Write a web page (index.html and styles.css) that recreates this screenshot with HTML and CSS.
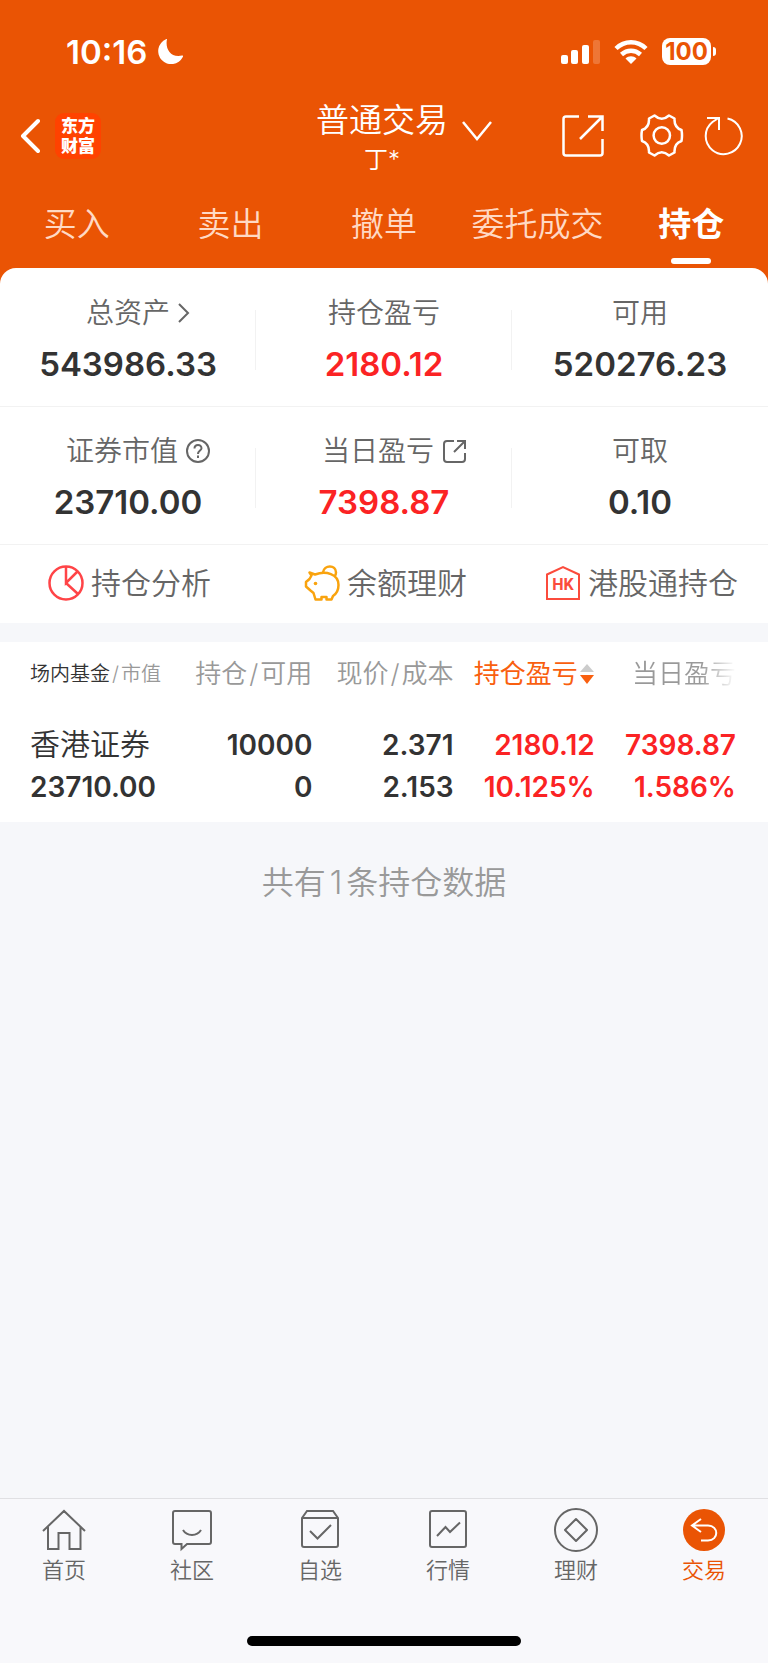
FILE: index.html
```html
<!DOCTYPE html>
<html lang="zh-CN">
<head>
    <meta charset="UTF-8">
    <meta name="viewport" content="width=device-width, initial-scale=1.0">
    <title>持仓</title>
    <link rel="stylesheet" href="styles.css">
</head>
<body>

    <div class="top">
        <div class="status-bar">
            <span class="time">10:16</span>
            <svg class="moon" width="26" height="26" viewBox="0 0 26 26"><path d="M10 0C8 9 13 19 25 16.500C26 16.300 26.300 17 25.800 18A13 13 0 1 1 9 .2C9.800-.2 10.200-.2 10 0Z" fill="#fff"/></svg>
            <div class="status-icons">
                <svg width="39" height="26" viewBox="0 0 39 26" fill="#fff">
                    <rect x="0" y="16" width="7" height="9" rx="2"/>
                    <rect x="10" y="11" width="7" height="14" rx="2"/>
                    <rect x="21" y="6" width="7" height="19" rx="2"/>
                    <rect x="32" y="1" width="7" height="24" rx="2" opacity=".2"/>
                </svg>
                <svg width="34" height="26" viewBox="0 0 34 26" fill="none" stroke="#fff" stroke-width="4.500">
                    <path d="M2 9.500C10.500 1.200 23.500 1.200 32 9.500"/>
                    <path d="M7.500 15.500C13 10.500 21 10.500 26.500 15.500"/>
                    <path d="M11.500 19.500C14.500 16.500 19.500 16.500 22.500 19.500L17 25Z" fill="#fff" stroke="none"/>
                </svg>
                <span class="battery">100</span>
            </div>
        </div>

        <header class="header">
            <div class="header-left">
                <button class="icon-btn" aria-label="返回">
                    <svg width="20" height="36" viewBox="0 0 20 36" fill="none" stroke="#fff" stroke-width="4" stroke-linecap="round" stroke-linejoin="round"><path d="M18 3L3 18L18 33"/></svg>
                </button>
                <span class="logo">东方<br>财富</span>
            </div>
            <button class="account">
                <span class="account-name">普通交易</span>
                <svg width="30" height="22" viewBox="0 0 30 22" fill="none" stroke="#fff" stroke-width="2.500"><path d="M1 2L15 19L29 2"/></svg>
                <span class="account-user">丁*</span>
            </button>
            <div class="header-right">
                <button class="icon-btn" aria-label="分享">
                    <svg width="42" height="44" viewBox="0 0 42 44" fill="none" stroke="#fff" stroke-width="2.500"><path d="M17 2.500H4Q1.500 2.500 1.500 5V39Q1.500 41.500 4 41.500H38Q40.500 41.500 40.500 39V25M26 2.500H40.500V17M40.500 2.500L18 25"/></svg>
                </button>
                <button class="icon-btn gear" aria-label="设置">
                    <svg width="44" height="44" viewBox="0 0 44 44" fill="none" stroke="#fff" stroke-width="2.500" stroke-linejoin="round"><path d="M14.500 1.500Q21.800 8 29 1.500L34.500 4.500Q34 13.500 41.500 16Q42.500 21.500 41.500 27Q34 29.500 34.500 38.500L29 41.500Q21.800 35 14.500 41.500L9 38.500Q9.500 29.500 2 27Q1 21.500 2 16Q9.500 13.500 9 4.500Z"/><circle cx="21.800" cy="21.500" r="8.200"/></svg>
                </button>
                <button class="icon-btn" aria-label="刷新">
                    <svg width="40" height="40" viewBox="0 0 40 40" fill="none" stroke="#fff" stroke-width="2"><path d="M23.500 2.500A18 18 0 1 1 8.500 6L14.500 2M3 2H15V14"/></svg>
                </button>
            </div>
        </header>

        <nav class="tabs">
            <a href="#">买入</a>
            <a href="#">卖出</a>
            <a href="#">撤单</a>
            <a href="#">委托成交</a>
            <a href="#" class="active">持仓</a>
        </nav>

        <section class="assets">
            <div class="stats">
                <div class="stat">
                    <a href="#" class="label with-icon">总资产
                        <svg width="12" height="20" viewBox="0 0 12 20" fill="none" stroke="#666" stroke-width="2"><path d="M1 1L10 10L1 19"/></svg>
                    </a>
                    <div class="value">543986.33</div>
                </div>
                <div class="stat">
                    <div class="label">持仓盈亏</div>
                    <div class="value red">2180.12</div>
                </div>
                <div class="stat">
                    <div class="label">可用</div>
                    <div class="value">520276.23</div>
                </div>
            </div>
            <div class="stats">
                <div class="stat">
                    <div class="label with-icon">证券市值
                        <svg width="24" height="24" viewBox="0 0 24 24" fill="none" stroke="#666" stroke-width="2"><circle cx="12" cy="12" r="11"/><path d="M8.500 9.500C8.500 4.800 15.500 4.800 15.500 9.200C15.500 11.500 12 11.800 12 15M12 16.500V19"/></svg>
                    </div>
                    <div class="value">23710.00</div>
                </div>
                <div class="stat">
                    <a href="#" class="label with-icon">当日盈亏
                        <svg width="24" height="24" viewBox="0 0 24 24" fill="none" stroke="#666" stroke-width="2"><path d="M12 2H5Q2 2 2 5V20Q2 23 5 23H20Q23 23 23 20V14M15 2H23V10M22 3L12 13"/></svg>
                    </a>
                    <div class="value red">7398.87</div>
                </div>
                <div class="stat">
                    <div class="label">可取</div>
                    <div class="value">0.10</div>
                </div>
            </div>
            <div class="actions">
                <a href="#">
                    <svg width="36" height="36" viewBox="0 0 36 36" fill="none" stroke="#ff4447" stroke-width="2.500"><circle cx="18" cy="18" r="16.500"/><path d="M18 1.500V18L29.500 6.500M18 18L30 29"/></svg>
                    持仓分析
                </a>
                <a href="#">
                    <svg width="36" height="36" viewBox="0 0 36 36" fill="none" stroke="#f9a30e" stroke-width="2.500" stroke-linejoin="round"><path d="M5.500 7.500L11 9.500C22 5.500 34.500 9 34.500 20C34.500 25 32 29 29 31L27.500 34.500H22.500V32H17.500V34.500H11.500L9.500 28L6.500 25.500L2 21.500V17L5.500 14L7.500 10.500Z"/><path d="M19 7.500C20-.5 32-.5 32 7.500Q32 10 30.500 11.500"/><circle cx="11.500" cy="18.500" r="1.800" fill="#f9a30e" stroke="none"/></svg>
                    余额理财
                </a>
                <a href="#">
                    <svg width="36" height="36" viewBox="0 0 36 36" fill="none" stroke="#fb4b3c" stroke-width="2"><path d="M2 34V9.500L18 2L34 9.500V34Z"/><text class="hk" x="18" y="25" text-anchor="middle">HK</text></svg>
                    港股通持仓
                </a>
            </div>
        </section>
    </div>

    <section class="holdings">
        <table>
            <thead>
                <tr>
                    <th class="first"><span class="dark">场内基金</span><span class="slash">/</span>市值</th>
                    <th>持仓<span class="slash">/</span>可用</th>
                    <th>现价<span class="slash">/</span>成本</th>
                    <th class="sorted">持仓盈亏<svg width="16" height="22" viewBox="0 0 16 22"><path d="M8 1L15 9H1Z" fill="#ccc"/><path d="M1 12H15L8 21Z" fill="#f95f0f"/></svg></th>
                    <th class="faded">当日盈亏</th>
                </tr>
            </thead>
            <tbody>
                <tr>
                    <td><span class="name">香港证券</span>23710.00</td>
                    <td>10000<br>0</td>
                    <td>2.371<br>2.153</td>
                    <td class="red">2180.12<br>10.125%</td>
                    <td class="red">7398.87<br>1.586%</td>
                </tr>
            </tbody>
        </table>
    </section>

    <p class="summary">共有<span class="count">1</span>条持仓数据</p>

    <footer class="bottom">
        <nav class="tabbar">
            <a href="#">
                <svg width="44" height="44" viewBox="0 0 44 44"><path d="M1 23L22 3L43 23M6 19V41H16.500V25H27.500V41H38.500V19"/></svg>
                首页
            </a>
            <a href="#">
                <svg width="44" height="44" viewBox="0 0 44 44"><path d="M5 3H39Q41 3 41 5V34Q41 36 39 36H17L11.500 41V36H5Q3 36 3 34V5Q3 3 5 3Z"/><path d="M13 22C17 28.500 27 28.500 31 22"/></svg>
                社区
            </a>
            <a href="#">
                <svg width="44" height="44" viewBox="0 0 44 44"><path d="M4 10L9 3H35L40 10V37Q40 39 38 39H6Q4 39 4 37ZM4 10H40M12 23L19.500 30.500L33 17"/></svg>
                自选
            </a>
            <a href="#">
                <svg width="44" height="44" viewBox="0 0 44 44"><rect x="4" y="3" width="36" height="36" rx="2"/><path d="M11 28L19.500 19L24 24L34 14.500"/></svg>
                行情
            </a>
            <a href="#">
                <svg width="44" height="44" viewBox="0 0 44 44"><circle cx="22" cy="22" r="21"/><path d="M22 11L33 22L22 33L11 22Z" stroke-linejoin="round"/></svg>
                理财
            </a>
            <a href="#" class="current">
                <svg width="44" height="44" viewBox="0 0 44 44"><circle cx="22" cy="22" r="21" fill="#ea5404" stroke="none"/><path d="M19 11L10 17.500L19 24M10 17.500H26C37 17.500 37 32.500 26 32.500H19" stroke="#fff"/></svg>
                交易
            </a>
        </nav>
        <div class="home-indicator"></div>
    </footer>

</body>
</html>
```

FILE: styles.css
```css
* {
    box-sizing: border-box;
}

body {
    margin: 0;
    min-height: 100vh;
    display: flex;
    flex-direction: column;
    background: #f6f7fa;
    color: #333;
    font-family: Inter, "Noto Sans CJK SC", sans-serif;
    font-size: 28px;
    font-weight: 350;
    line-height: 36px;
}

a {
    color: inherit;
    text-decoration: none;
}

button {
    padding: 0;
    border: none;
    background: none;
    color: inherit;
    font: inherit;
    cursor: pointer;
}

svg {
    display: block;
    flex-shrink: 0;
}

.red {
    color: #fb2324;
}

.top {
    background: #ea5404;
}

/* status bar */
.status-bar {
    height: 96px;
    padding: 7px 52px 0 66px;
    display: flex;
    align-items: center;
    gap: 10px;
    color: #fff;
}

.time {
    font-size: 33px;
    font-weight: 600;
}

.status-icons {
    margin-left: auto;
    display: flex;
    align-items: center;
    gap: 14px;
}

.battery {
    position: relative;
    width: 49px;
    margin-right: 5px;
    border-radius: 8px;
    background: #fff;
    color: #ea5404;
    font-size: 24px;
    font-weight: 700;
    line-height: 27px;
    text-align: center;
}

.battery::after {
    content: "";
    position: absolute;
    right: -5px;
    top: 9px;
    width: 3px;
    height: 9px;
    border-radius: 0 4px 4px 0;
    background: #fff;
}

/* header */
.header {
    height: 80px;
    padding: 0 24px 0 20px;
    display: grid;
    grid-template-columns: 1fr auto 1fr;
    align-items: center;
    color: #fff;
}

.header-left,
.header-right {
    display: flex;
    align-items: center;
}

.header-left {
    gap: 15px;
}

.header-right {
    justify-content: flex-end;
}

.gear {
    margin: 0 20px 0 36px;
}

.logo {
    width: 46px;
    height: 46px;
    padding-top: 3px;
    border-radius: 9px;
    background: #ff4200;
    font-size: 17px;
    font-weight: 900;
    line-height: 20px;
    text-align: center;
}

.account {
    padding-left: 44px;
    display: grid;
    grid-template-columns: auto 30px;
    column-gap: 14px;
    align-items: center;
}

.account svg {
    grid-area: 1 / 2 / 3 / 3;
    margin-bottom: 10px;
}

.account-name {
    font-size: 33px;
    line-height: 48px;
}

.account-user {
    font-size: 24px;
    line-height: 32px;
}

.tabs {
    display: grid;
    grid-template-columns: repeat(5, 1fr);
    height: 92px;
    padding-top: 24px;
    color: #ffd9c4;
    font-size: 33px;
    line-height: 48px;
    text-align: center;
}

.tabs .active {
    color: #fff;
    font-weight: 700;
}

.tabs .active::after {
    content: "";
    display: block;
    width: 40px;
    height: 6px;
    margin: 10px auto 0;
    border-radius: 3px;
    background: #fff;
}

/* asset card */
.assets {
    padding-top: 1px;
    border-radius: 16px 16px 0 0;
    background: #fff;
}

.stats {
    display: grid;
    grid-template-columns: repeat(3, 1fr);
    padding: 26px 0 22px;
    border-bottom: 1px solid #f2f2f2;
}

.stat {
    display: flex;
    flex-direction: column;
    align-items: center;
    gap: 13px;
    background: linear-gradient(#f2f2f2, #f2f2f2) right center / 1px 60px no-repeat;
}

.stat:last-child {
    background: none;
}

.label {
    color: #666;
}

.with-icon {
    display: flex;
    align-items: center;
    gap: 8px;
    padding-left: 20px;
}

.value {
    font-size: 33px;
    font-weight: 600;
    line-height: 40px;
}

.actions {
    display: grid;
    grid-template-columns: repeat(3, 1fr);
    height: 78px;
    padding-bottom: 2px;
    color: #666;
    font-size: 30px;
}

.actions a {
    display: flex;
    align-items: center;
    justify-content: center;
    gap: 7px;
    padding-left: 3px;
}

.hk {
    fill: #fb4b3c;
    stroke: none;
    font-size: 16px;
    font-weight: 700;
    font-family: Roboto, sans-serif;
}

/* holdings table */
.holdings {
    margin-top: 19px;
    padding: 0 32px 14px 30px;
    background: #fff;
}

table {
    width: 100%;
    border-collapse: collapse;
    table-layout: fixed;
}

th,
td {
    padding: 0;
    text-align: right;
    white-space: nowrap;
}

th {
    height: 64px;
    color: #999;
    font-size: 26px;
    font-weight: 350;
}

th:first-child,
td:first-child {
    text-align: left;
}

.first {
    font-size: 20px;
}

.slash {
    padding: 0 2px;
}

.dark {
    color: #333;
}

.sorted {
    color: #f95f0f;
    font-weight: 400;
}

.sorted svg {
    display: inline-block;
    margin-left: 1px;
    vertical-align: -2px;
}

.faded {
    background: linear-gradient(90deg, #999 75%, #fff);
    background-clip: text;
    -webkit-background-clip: text;
    color: transparent;
}

td {
    padding-top: 18px;
    font-size: 28px;
    font-weight: 600;
    line-height: 42px;
}

.name {
    display: block;
    margin-bottom: 2px;
    font-size: 30px;
    font-weight: 350;
    line-height: 40px;
}

.summary {
    margin: 37px 0;
    color: #999;
    font-size: 32px;
    line-height: 48px;
    text-align: center;
}

.count {
    padding: 0 4px;
}

/* bottom bar */
.bottom {
    margin-top: auto;
    padding-bottom: 17px;
    border-top: 1px solid #e0e0e3;
    background: #f8f8fb;
}

.tabbar {
    display: grid;
    grid-template-columns: repeat(6, 1fr);
    padding-top: 9px;
    color: #666;
    font-size: 22px;
    line-height: 36px;
}

.tabbar a {
    display: flex;
    flex-direction: column;
    align-items: center;
}

.tabbar svg {
    fill: none;
    stroke: #666;
    stroke-width: 2;
}

.tabbar .current {
    color: #ea5404;
}

.home-indicator {
    width: 274px;
    height: 10px;
    margin: 48px auto 0;
    border-radius: 5px;
    background: #000;
}
```
